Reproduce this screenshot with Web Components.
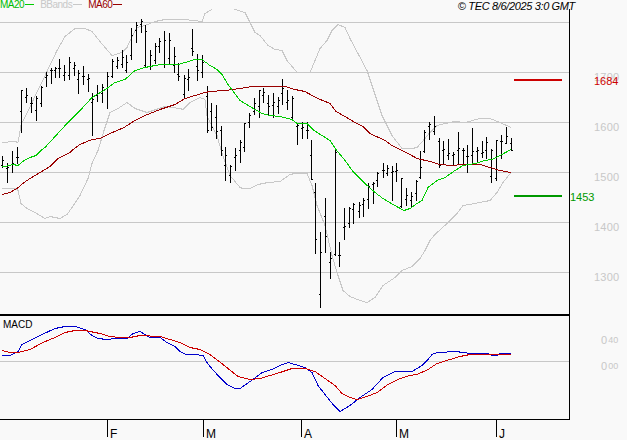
<!DOCTYPE html>
<html lang="en">
<head>
<meta charset="utf-8">
<title>TEC chart</title>
<style>
html,body{margin:0;padding:0;background:#f9f9f9;}
body{font:11px "Liberation Sans",Arial,sans-serif;width:627px;height:440px;overflow:hidden;}
</style>
</head>
<body>
<stock-chart>
  <chart-header slot="header">
    <legend-item color="#00bb00" line="#00cc00" label="MA20"></legend-item>
    <legend-item color="#c8c8c8" line="#c8c8c8" label="BBands"></legend-item>
    <legend-item color="#990000" line="#990000" label="MA60"></legend-item>
    <span slot="copy">© TEC 8/6/2025 3:0 GMT</span>
  </chart-header>
  <price-panel slot="price">
    <axis-label>1700</axis-label>
    <axis-label>1600</axis-label>
    <axis-label>1500</axis-label>
    <axis-label>1400</axis-label>
    <axis-label>1300</axis-label>
    <level-tag slot="tags" style="left:594px;top:66px;color:#cc0000">1684</level-tag>
    <level-tag slot="tags" style="left:570px;top:182px;color:#009900">1453</level-tag>
  </price-panel>
  <macd-panel slot="macd">
    <span slot="name">MACD</span>
    <axis-label macd><span>0</span><small>40</small></axis-label>
    <axis-label macd><span>0</span><small>00</small></axis-label>
  </macd-panel>
  <time-axis slot="time">
    <month-tick style="width:96px">F</month-tick>
    <month-tick style="width:98px">M</month-tick>
    <month-tick style="width:95px">A</month-tick>
    <month-tick style="width:100px">M</month-tick>
    <month-tick style="width:60px">J</month-tick>
  </time-axis>
</stock-chart>

<script>
const P = s => s.trim().split(/\s+/).map(p => p.split(',').map(Number));
const pts = a => a.map(([x,y]) => x + ',' + (y + .5)).join(' ');

const MA20 = P(`2,166 7,165.5 13,164 18,165 24,160 30,157 36,155 41,150 45,147 67,123 80,110 92,97 107,88 115,82 125,79 135,70 145,67 155,65 165,63.5 180,63.5 195,59 202,59 210,65 217,69 222,74 228,84 237,96 240,100 250,106 262,113 270,115 280,116 292,119 297,123 307,123 314,130 322,135 330,140 336,149 345,160 353,171 365,183 375,192 383,198 393,204 404,210 410,208 417,203 422,200 428,187 437,180 445,177 455,170 463,165 475,163 485,160 492,159 500,155 511,149`);
const MA60 = P(`2,194 10,192 17,188 24,182 30,178 40,172 50,166 58,158 70,152 73,149 80,144 92,139 100,138 110,133 124,127 135,120 145,115 160,109 175,104 185,98 195,95 205,92 210,91 225,90 240,88 252,86 285,86 295,89 305,91 312,95 318,98 330,103 336,111 345,116 355,122 363,126 370,133 385,140 392,145 402,150 410,154 417,158 430,161 440,164 452,165 462,164 480,164 490,167 500,170 511,172`);
const BBU = P(`2,142 15,141 18,142 21,125 33,100 47,71 57,50 65,36 75,28 85,28 92,31 100,41 106,48 112,55 122,52 127,47 132,36 137,27 145,25 155,21 165,19 185,19 202,21 205,13 210,10 213,8 234,8 235,9 245,12 250,22 255,32 260,35 268,45 275,49 282,50 287,60 293,67 297,72 310,72 315,60 320,48 327,40 332,30 338,24 345,27 350,38 358,53 367,70 373,88 382,115 392,135 402,148 412,148 417,147 425,138 430,132 437,125 445,123 455,121 465,122 480,118 490,118 500,122 511,127`);
const BBL = P(`2,188 16,188 18,190 21,203 27,208 35,212 45,218 50,216 60,218 67,214 72,207 80,195 88,178 92,163 98,150 104,130 110,112 118,108 127,102 135,108 147,112 165,106 180,108 183,109 190,102 200,97 205,99 207,115 210,122 217,135 222,153 230,175 240,187 243,188 250,188 258,184 268,182 280,181 290,174 295,173 307,173 312,185 317,205 325,225 332,255 338,275 343,290 350,296 360,300 367,302 375,297 383,285 395,277 402,270 412,266 420,258 425,250 430,240 435,234 447,223 457,213 463,205 475,203 490,200 497,192 503,182 511,172`);
const BLUE = P(`2,355 10,355 18,351 22,344 30,340 42,334 55,328 65,326 75,326 85,329 92,335 98,338 107,339 115,338 127,338 133,333 140,331 145,334 150,337 160,337 167,342 175,346 180,351 186,354 195,354 203,355 207,362 210,366 218,375 227,384 235,388 240,388 250,381 257,376 262,372 272,369 280,365 288,362 295,364 305,367 312,372 318,385 325,394 333,404 340,411 350,405 360,397 372,389 383,377 395,371 400,371 412,371 417,368 422,365 428,359 432,354 437,352 457,351 462,352 472,353 488,353 492,355 497,355 500,353 511,353`);
const SIG = P(`2,350 10,352 18,352 30,349 43,342 55,337 65,332 75,330 85,330 100,333 110,336 120,337 130,337 140,335 160,336 170,339 180,342 190,347 200,349 210,354 218,360 228,368 238,376 250,379 260,378 270,375 280,372 292,368 305,368 315,371 325,378 335,385 342,393 350,397 357,399 367,396 377,392 388,384 400,378 410,375 417,374 428,369 437,363 450,359 460,356 470,354 511,354`);

// x, high, low, open tick, close tick
const BARS = P(`2,156,167,165,160 7,163,182,168,167 12,151,172,164,163 17,147,163,157,157
21,90,132,111,90 26,88,102,97,95 31,97,112,103,103 36,96,120,110,98 41,86,106,103,87 46,72,86,77,75 51,68,83,70,70 55,67,77,70,68 59,59,77,68,68 64,65,80,75,72 69,57,79,75,62 74,62,75,68,65
78,70,93,79,73 83,66,84,76,76 88,74,91,79,78 92,93,135,102,99 97,85,101,95,93 102,84,102,93,87 107,72,108,88,76 112,59,77,76,61 117,57,68,66,60 122,50,67,64,57 126,55,72,70,62 131,28,59,55,35 136,22,42,30,25 141,19,32,24,21
145,25,67,65,31 150,50,69,66,55 155,43,63,60,46 159,38,52,46,41 164,31,67,64,40 169,33,63,58,40 174,47,72,65,56 178,63,80,74,76 184,75,98,94,78 188,69,90,79,77 192,29,55,48,51 197,54,80,66,70 202,55,77,72,62 207,86,132,96,130
211,103,130,111,127 216,105,138,117,131 221,126,155,130,150 225,147,180,165,155 230,165,182,175,166 235,148,170,157,155 240,140,162,150,142 244,123,151,147,123 249,113,127,122,115 254,98,114,111,103 259,90,117,106,90 263,88,102,95,92 268,95,114,103,106 273,93,117,105,102 278,97,113,106,100 282,79,104,93,88 287,90,109,102,100 292,96,119,117,98
297,123,144,126,125 302,122,138,128,127 307,122,138,130,130 311,140,179,155,179 315,183,253,192,239 320,232,307,294,252 325,198,252,216,236 330,252,278,262,258 335,148,255,254,152 339,242,266,255,255 344,208,239,227,226 349,207,227,223,208 353,203,223,209,204 359,202,217,211,205 363,198,216,204,200 368,183,208,199,186 373,182,203,184,183 377,172,186,180,173
383,163,177,170,170 387,165,175,173,168 392,166,200,172,171 396,163,181,171,170 401,178,207,206,178 406,188,205,199,195 411,192,206,200,196 416,180,200,193,181 420,151,178,177,167 424,130,152,151,132 429,122,139,126,124 434,116,134,131,126 439,138,167,141,165 443,141,163,150,149 448,139,159,155,153 453,152,164,155,154 458,132,163,150,148 463,148,164,150,150 467,145,172,156,156 472,128,163,155,151 477,147,161,151,150 482,141,157,153,152 486,137,158,150,142 491,149,182,176,150 496,140,180,178,140 501,135,158,141,141 506,127,143,143,136 511,138,150,143,150`);

const GRID_PRICE = [22,72,122,172,222,272];

const svgLine = (arr, color) => `<polyline fill="none" stroke="${color}" points="${pts(arr)}"/>`;

class StockChart extends HTMLElement {
  constructor(){ super();
    this.attachShadow({mode:'open'}).innerHTML = `
    <style>
      :host{display:flex;flex-direction:column;width:627px;height:440px;background:#f9f9f9;color:#000;font:11px "Liberation Sans",Arial,sans-serif;}
    </style>
    <slot name="header"></slot><slot name="price"></slot><slot name="macd"></slot><slot name="time"></slot>`;
  }
}
class ChartHeader extends HTMLElement {
  constructor(){ super();
    this.attachShadow({mode:'open'}).innerHTML = `
    <style>
      :host{display:flex;height:9px;justify-content:space-between;align-items:center;position:relative;z-index:1;}
      .legend{display:flex;gap:6px;align-items:center;}
      .copy{font:italic 11px "Liberation Sans",Arial,sans-serif;margin-right:52px;white-space:nowrap;margin-top:2px;letter-spacing:-.35px;}
    </style>
    <div class="legend"><slot></slot></div>
    <div class="copy"><slot name="copy"></slot></div>`;
  }
}
class LegendItem extends HTMLElement {
  constructor(){ super();
    const c=this.getAttribute('color'), l=this.getAttribute('line'), t=this.getAttribute('label');
    this.attachShadow({mode:'open'}).innerHTML = `
    <style>
      :host{display:inline-flex;align-items:center;gap:1px;font-size:10px;letter-spacing:-.5px;line-height:9px;white-space:nowrap;}
      i{display:block;width:9px;height:1px;}
    </style>
    <span style="color:${c}">${t}</span><i style="background:${l}"></i>`;
  }
}
class PricePanel extends HTMLElement {
  constructor(){ super();
    const grid = GRID_PRICE.map(y=>`<rect x="0" y="${y}" width="569" height="1" fill="#c8c8c8"/>`).join('');
    const bars = BARS.map(([x,h,l,o,c])=>`<rect x="${x}" y="${h}" width="1" height="${l-h+1}"/><rect x="${x-1}" y="${o}" width="1" height="1"/><rect x="${x+1}" y="${c}" width="1" height="1"/>`).join('');
    this.attachShadow({mode:'open'}).innerHTML = `
    <style>
      :host{display:flex;position:relative;height:305px;}
      .plot{width:569px;height:305px;border-right:1px solid #000;flex:none;}
      svg{display:block;}
      .scale{display:flex;flex-direction:column;padding:43px 0 0 24px;}
    </style>
    <div class="plot"><svg width="569" height="305" viewBox="0 9 569 305" shape-rendering="crispEdges">
      ${grid}
      <g stroke-width="1">${svgLine(BBU,'#c8c8c8')}${svgLine(BBL,'#c8c8c8')}</g>
      <g fill="#000">${bars}</g>
      ${svgLine(MA60,'#990000')}${svgLine(MA20,'#00cc00')}
      <rect x="514" y="79" width="48" height="2" fill="#cc0000"/>
      <rect x="514" y="195" width="48" height="2" fill="#009900"/>
    </svg></div>
    <div class="scale"><slot></slot></div>
    <slot name="tags"></slot>`;
  }
}
class MacdPanel extends HTMLElement {
  constructor(){ super();
    this.attachShadow({mode:'open'}).innerHTML = `
    <style>
      :host{display:flex;position:relative;height:103px;border-top:2px solid #000;width:570px;border-bottom:1px solid #000;}
      .plot{width:569px;height:103px;border-right:1px solid #000;flex:none;position:relative;}
      svg{display:block;}
      .name{position:absolute;left:3px;top:3px;font-size:10px;line-height:12px;color:#000;}
      .scale{display:flex;flex-direction:column;padding:18px 0 0 31px;flex:none;width:26px;}
    </style>
    <div class="plot"><svg width="569" height="103" viewBox="0 316 569 103" shape-rendering="crispEdges">
      <rect x="0" y="361" width="569" height="1" fill="#c8c8c8"/>
      ${svgLine(BLUE,'#0000cc')}${svgLine(SIG,'#cc0000')}
    </svg><div class="name"><slot name="name"></slot></div></div>
    <div class="scale"><slot></slot></div>`;
  }
}
class AxisLabel extends HTMLElement {
  constructor(){ super();
    this.attachShadow({mode:'open'}).innerHTML = `
    <style>
      :host{display:flex;height:50px;align-items:center;color:#c8c8c8;font-size:11px;letter-spacing:.2px;line-height:12px;}
      :host([macd]){height:26px;gap:1px;align-items:flex-start;}
      ::slotted(small){font-size:9px;letter-spacing:0;}
    </style><slot></slot>`;
  }
}
class LevelTag extends HTMLElement {
  constructor(){ super();
    this.attachShadow({mode:'open'}).innerHTML = `
    <style>:host{position:absolute;display:block;font-size:11px;line-height:12px;}</style><slot></slot>`;
  }
}
class TimeAxis extends HTMLElement {
  constructor(){ super();
    this.attachShadow({mode:'open'}).innerHTML = `
    <style>:host{display:flex;padding-left:107px;height:17px;}</style><slot></slot>`;
  }
}
class MonthTick extends HTMLElement {
  constructor(){ super();
    this.attachShadow({mode:'open'}).innerHTML = `
    <style>
      :host{display:flex;align-items:flex-end;box-sizing:border-box;flex:none;height:17px;border-left:1px solid #000;padding-left:2px;font-size:12px;line-height:6px;color:#000;}
    </style><slot></slot>`;
  }
}
customElements.define('stock-chart', StockChart);
customElements.define('chart-header', ChartHeader);
customElements.define('legend-item', LegendItem);
customElements.define('price-panel', PricePanel);
customElements.define('macd-panel', MacdPanel);
customElements.define('axis-label', AxisLabel);
customElements.define('level-tag', LevelTag);
customElements.define('time-axis', TimeAxis);
customElements.define('month-tick', MonthTick);
</script>
</body>
</html>
